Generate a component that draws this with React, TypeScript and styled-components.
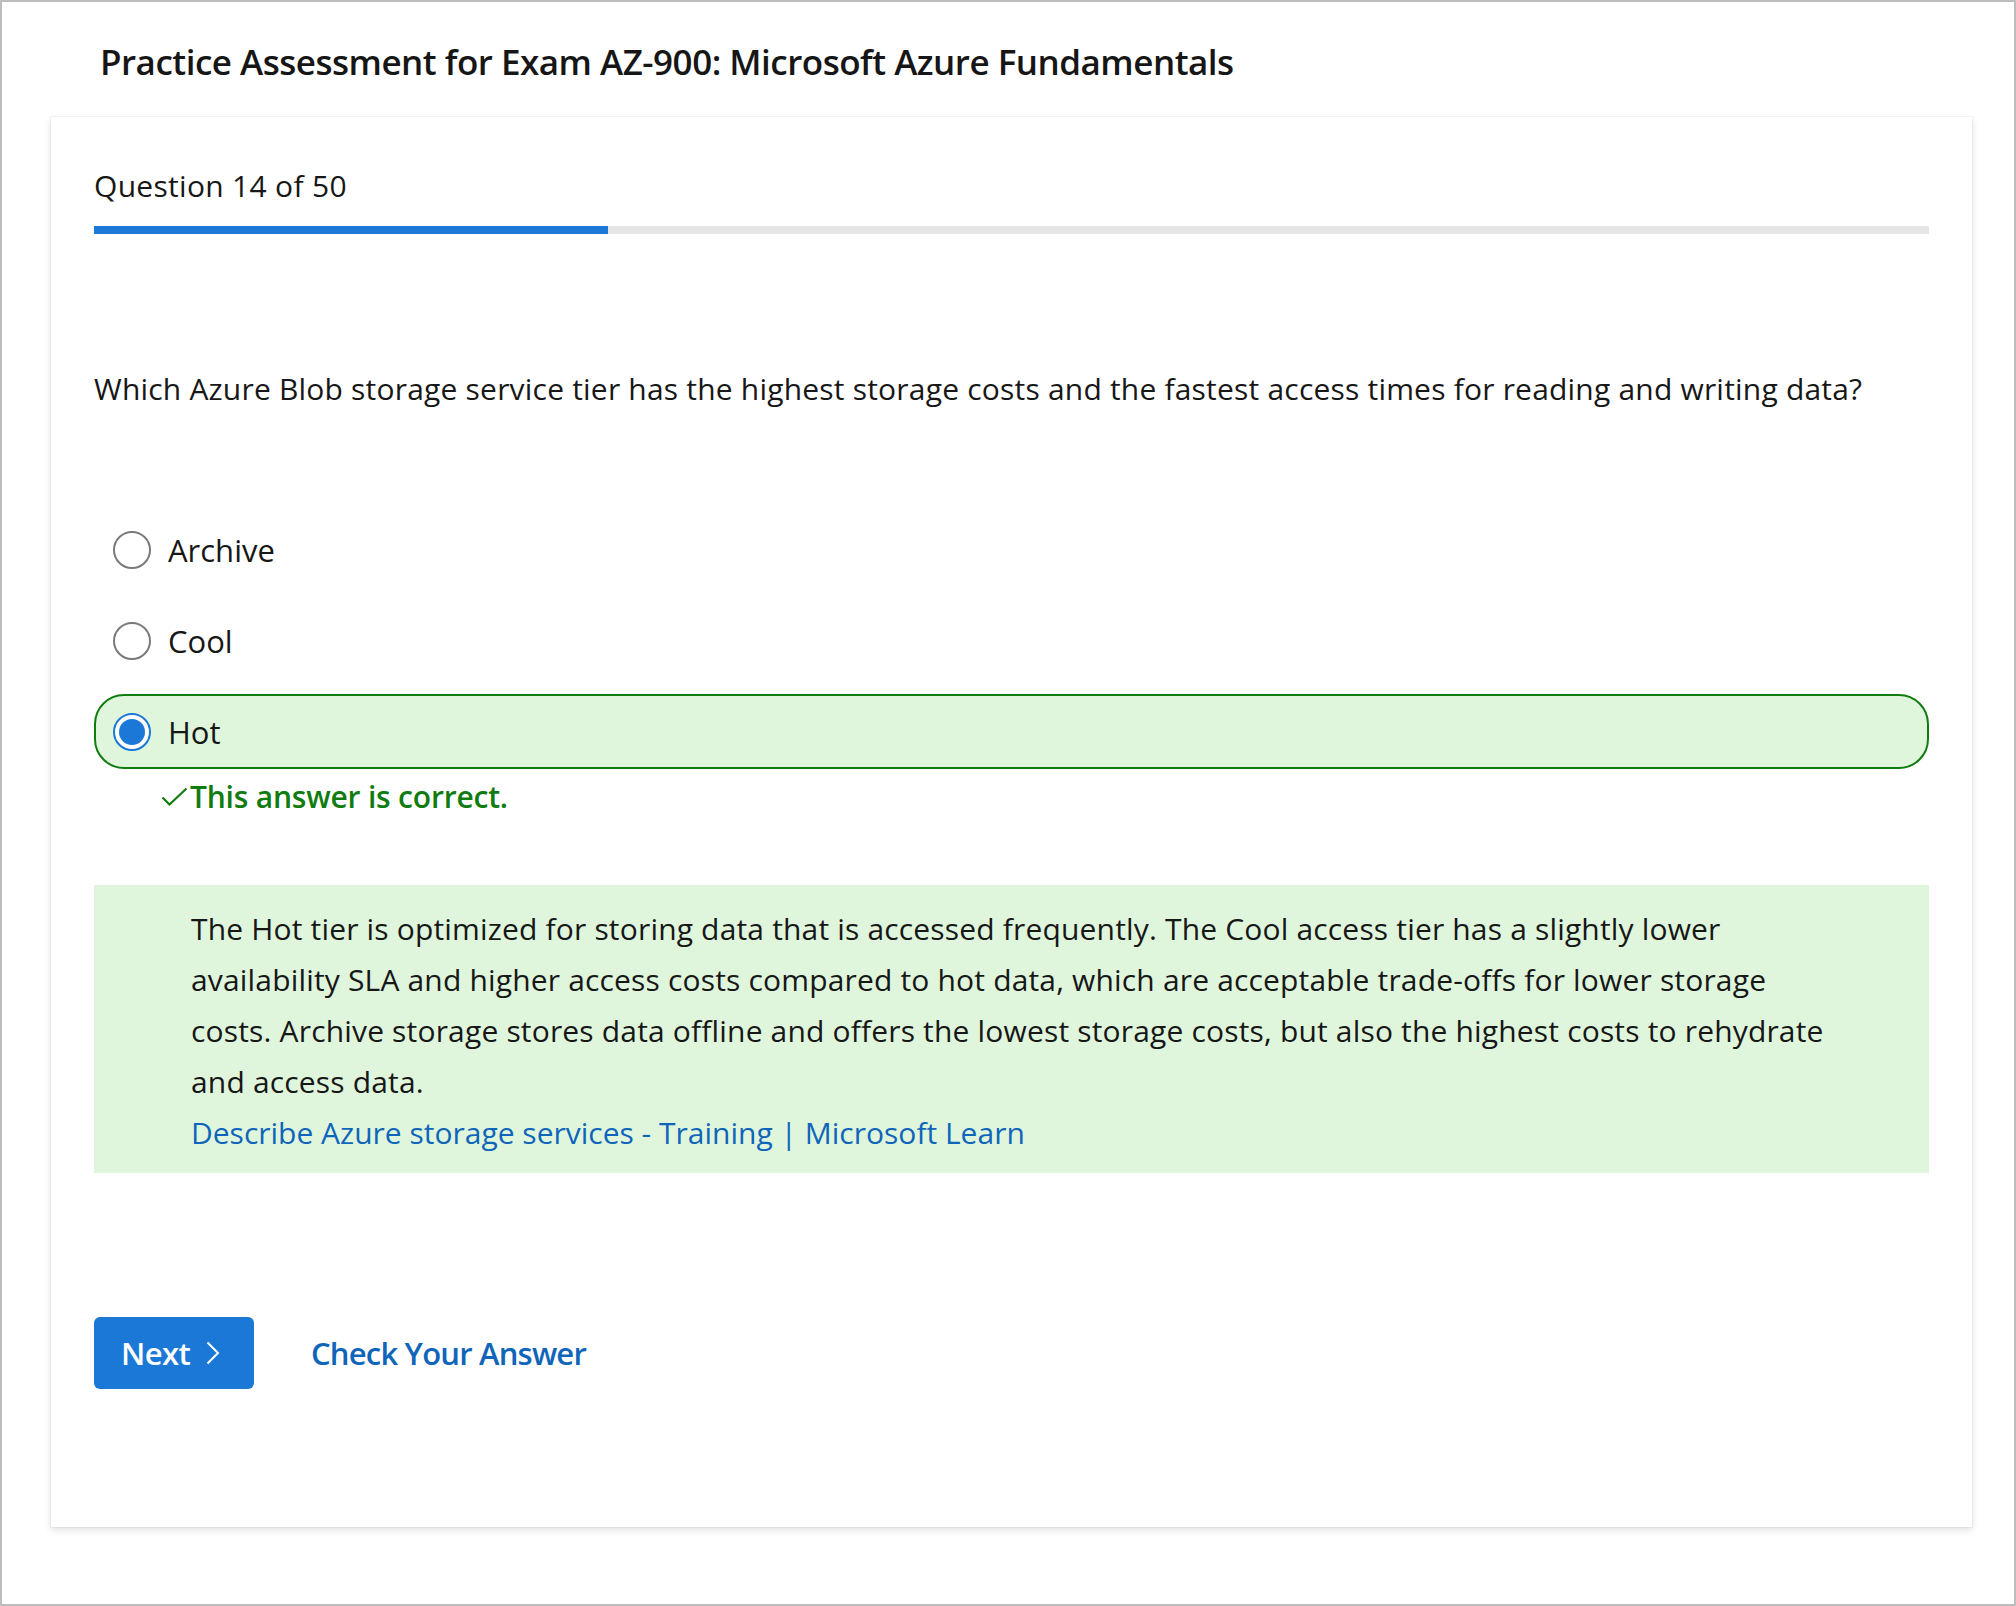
import styled, { createGlobalStyle } from "styled-components";

const GlobalStyle = createGlobalStyle`
  html, body {
    margin: 0;
    padding: 0;
    background: #ffffff;
  }
  body {
    font-family: "Open Sans", "Noto Sans", sans-serif;
    color: #171717;
  }
`;

const Page = styled.div`
  box-sizing: border-box;
  width: 2016px;
  height: 1606px;
  border: 2px solid #bdbdbd;
  background: #ffffff;
  padding-top: 36px;
`;

const Title = styled.h1`
  margin: 0 0 0 98px;
  font-size: 35px;
  line-height: 48px;
  font-weight: 600;
  letter-spacing: -0.5px;
  color: #161616;
`;

const Card = styled.div`
  box-sizing: border-box;
  margin: 31px 0 0 49px;
  width: 1921px;
  height: 1410px;
  padding: 49px 43px 0 43px;
  background: #ffffff;
  box-shadow: 0 0 0 1px rgba(0, 0, 0, 0.035), 0 3px 7px rgba(0, 0, 0, 0.13);
`;

const Counter = styled.div`
  font-size: 30px;
  line-height: 40px;
  letter-spacing: 0.3px;
`;

const Progress = styled.div`
  margin-top: 20px;
  height: 8px;
  background: #e5e5e5;
`;

const ProgressFill = styled.div`
  height: 100%;
  background: #1b78d6;
`;

const QuestionText = styled.p`
  margin: 135px 0 0 0;
  font-size: 30px;
  line-height: 40px;
  letter-spacing: 0.2px;
`;

const Options = styled.div`
  margin-top: 103px;
  display: flex;
  flex-direction: column;
  gap: 16px;
`;

const OptionRow = styled.label<{ $correct?: boolean }>`
  box-sizing: border-box;
  height: 75px;
  display: flex;
  align-items: center;
  gap: 17px;
  padding-left: 17px;
  border: 2px solid ${(p) => (p.$correct ? "#107c10" : "transparent")};
  border-radius: 30px;
  background: ${(p) => (p.$correct ? "#dff6dd" : "transparent")};
  font-size: 31px;
  line-height: 40px;
  cursor: pointer;
`;

const Radio = styled.span<{ $checked?: boolean }>`
  box-sizing: border-box;
  width: 38px;
  height: 38px;
  border-radius: 50%;
  border: 2px solid ${(p) => (p.$checked ? "#1b78d6" : "#7a7a7a")};
  background: #ffffff;
  display: flex;
  align-items: center;
  justify-content: center;
  flex-shrink: 0;

  &::after {
    content: "";
    display: ${(p) => (p.$checked ? "block" : "none")};
    width: 26px;
    height: 26px;
    border-radius: 50%;
    background: #1b78d6;
  }
`;

const Feedback = styled.div`
  margin-top: 8px;
  padding-left: 67px;
  display: flex;
  align-items: center;
  gap: 2px;
  font-size: 30px;
  line-height: 40px;
  font-weight: 600;
  letter-spacing: -0.2px;
  color: #107c10;
`;

const Explanation = styled.div`
  margin-top: 68px;
  box-sizing: border-box;
  height: 288px;
  padding: 18px 97px 0 97px;
  background: #dff6dd;
  font-size: 30px;
  line-height: 51px;
`;

const ExplanationText = styled.p`
  margin: 0;
  letter-spacing: 0.17px;
`;

const LearnLink = styled.a`
  color: #0f65b9;
  text-decoration: none;
`;

const Actions = styled.div`
  margin-top: 144px;
  display: flex;
  align-items: center;
  gap: 57px;
`;

const NextButton = styled.button`
  box-sizing: border-box;
  width: 160px;
  height: 72px;
  padding: 0 0 0 27px;
  display: flex;
  align-items: center;
  gap: 16px;
  border: none;
  border-radius: 6px;
  background: #1b78d6;
  color: #ffffff;
  font-family: inherit;
  font-size: 31px;
  font-weight: 600;
  letter-spacing: -0.6px;
  cursor: pointer;
`;

const TextButton = styled.button`
  padding: 0;
  border: none;
  background: none;
  color: #0f65b9;
  font-family: inherit;
  font-size: 31px;
  font-weight: 600;
  letter-spacing: -0.8px;
  cursor: pointer;
`;

const options = [
  { id: "archive", label: "Archive" },
  { id: "cool", label: "Cool" },
  { id: "hot", label: "Hot" },
];

const App = () => {
  const current = 14;
  const total = 50;
  const selected = "hot";

  return (
    <>
      <GlobalStyle />
      <Page>
        <Title>Practice Assessment for Exam AZ-900: Microsoft Azure Fundamentals</Title>
        <Card>
          <Counter>
            Question {current} of {total}
          </Counter>
          <Progress>
            <ProgressFill style={{ width: `${(current / total) * 100}%` }} />
          </Progress>

          <QuestionText>
            Which Azure Blob storage service tier has the highest storage costs and the fastest
            access times for reading and writing data?
          </QuestionText>

          <Options>
            {options.map((opt) => (
              <OptionRow key={opt.id} $correct={opt.id === selected}>
                <Radio $checked={opt.id === selected} />
                {opt.label}
              </OptionRow>
            ))}
          </Options>

          <Feedback>
            <svg width="27" height="20" viewBox="0 0 27 20" fill="none">
              <path d="M1.5 10.5 L8.5 17.5 L25.5 1.5" stroke="#107c10" strokeWidth="2.2" />
            </svg>
            This answer is correct.
          </Feedback>

          <Explanation>
            <ExplanationText>
              The Hot tier is optimized for storing data that is accessed frequently. The Cool
              access tier has a slightly lower availability SLA and higher access costs compared to
              hot data, which are acceptable trade-offs for lower storage costs. Archive storage
              stores data offline and offers the lowest storage costs, but also the highest costs to
              rehydrate and access data.
            </ExplanationText>
            <LearnLink href="#">Describe Azure storage services - Training | Microsoft Learn</LearnLink>
          </Explanation>

          <Actions>
            <NextButton>
              Next
              <svg width="14" height="24" viewBox="0 0 14 24" fill="none">
                <path d="M1.5 1.5 L12 12 L1.5 22.5" stroke="#ffffff" strokeWidth="2" />
              </svg>
            </NextButton>
            <TextButton>Check Your Answer</TextButton>
          </Actions>
        </Card>
      </Page>
    </>
  );
};

export default App;
